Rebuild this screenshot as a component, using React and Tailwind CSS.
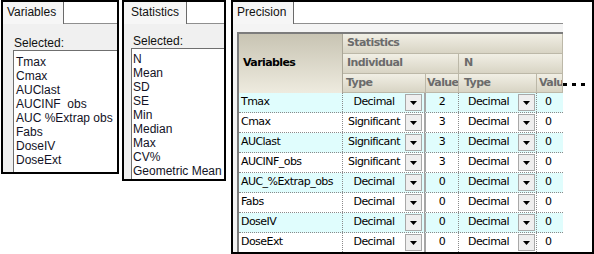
import React from "react";

const sans = { fontFamily: '"Liberation Sans", Arial, sans-serif' };
const tahoma = { fontFamily: '"DejaVu Sans", Verdana, sans-serif' };

const variables = ["Tmax", "Cmax", "AUClast", "AUCINF  obs", "AUC %Extrap obs", "Fabs", "DoseIV", "DoseExt"];
const stats = ["N", "Mean", "SD", "SE", "Min", "Median", "Max", "CV%", "Geometric Mean"];

const rows = [
  { name: "Tmax", type: "Decimal", value: "2" },
  { name: "Cmax", type: "Significant", value: "3" },
  { name: "AUClast", type: "Significant", value: "3" },
  { name: "AUCINF_obs", type: "Significant", value: "3" },
  { name: "AUC_%Extrap_obs", type: "Decimal", value: "0" },
  { name: "Fabs", type: "Decimal", value: "0" },
  { name: "DoseIV", type: "Decimal", value: "0" },
  { name: "DoseExt", type: "Decimal", value: "0" },
];

const Tab = ({ label, width, pad }) => (
  <div className="flex h-[22px] shrink-0">
    <div
      className={`${width} ${pad} h-full bg-[#f6f6f6] border-r border-[#6a6a6a] text-[12px] leading-[20px] text-[#111]`}
      style={sans}
    >
      {label}
    </div>
    <div className="flex-1 border-b border-[#8f8f8f] bg-white" />
  </div>
);

const DropButton = () => (
  <div className="w-[17px] h-[17px] shrink-0 border border-[#a8a8a8] bg-[#efefef] flex items-center justify-center">
    <svg width="7" height="4" viewBox="0 0 7 4">
      <polygon points="0,0 7,0 3.5,4" fill="#000" />
    </svg>
  </div>
);

const HeadCell = ({ className, children }) => (
  <div
    className={`${className} bg-linear-to-b from-[#f1efe5] to-[#d8d4c4] border-b border-r border-[#bcb8a8] flex items-center text-[11px] font-bold text-[#6b6b6b] tracking-[-0.6px] overflow-hidden whitespace-nowrap`}
  >
    {children}
  </div>
);

const ListPanel = ({ width, height, tab, tabWidth, tabPad, labelPad, labelTop, boxMargin, items, itemPad, listTop }) => (
  <div className={`${width} ${height} border-2 border-black bg-[#f0f0f0] flex flex-col overflow-hidden shrink-0`}>
    <Tab label={tab} width={tabWidth} pad={tabPad} />
    <div className={`${labelPad} ${labelTop} text-[12px] leading-[13px] text-[#111]`} style={sans}>
      Selected:
    </div>
    <div className={`${boxMargin} flex-1 bg-white border-l border-t border-[#6f6f6f] ${itemPad} ${listTop}`}>
      {items.map((item) => (
        <div key={item} className="text-[12px] leading-[14px] text-[#121225] whitespace-pre" style={sans}>
          {item}
        </div>
      ))}
    </div>
  </div>
);

const Precision = () => (
  <div className="w-[363px] h-[254px] border-2 border-black bg-white shrink-0 ml-[5px] relative">
    <div className="w-[330px] h-full flex flex-col overflow-hidden bg-[#f4f4f4]">
      <Tab label="Precision" width="w-[61px]" pad="pl-[4px]" />
      <div className="pl-[4px] pt-[8px]" style={tahoma}>
        <div className="border-l-2 border-t-2 border-[#7c7c7c] w-[326px]">
          {/* header */}
          <div className="flex h-[59px]">
            <div className="w-[104px] h-full bg-linear-to-b from-[#c8c4b3] to-[#eeebdf] border-r border-[#aaa697] flex items-center pl-[4px] text-[11px] font-bold text-black tracking-[-0.6px]">
              Variables
            </div>
            <div className="w-[220px] flex flex-col">
              <HeadCell className="h-[20px] w-full pl-[4px]">Statistics</HeadCell>
              <div className="flex h-[20px]">
                <HeadCell className="w-[116px] h-full pl-[4px]">Individual</HeadCell>
                <HeadCell className="w-[104px] h-full pl-[5px]">N</HeadCell>
              </div>
              <div className="flex h-[19px]">
                <HeadCell className="w-[83px] h-full pl-[3px]">Type</HeadCell>
                <HeadCell className="w-[33px] h-full pl-[1px]">Value</HeadCell>
                <HeadCell className="w-[78px] h-full pl-[5px]">Type</HeadCell>
                <HeadCell className="w-[26px] h-full pl-[2px]">Valu</HeadCell>
              </div>
            </div>
          </div>
          {/* rows */}
          {rows.map((row, i) => (
            <div
              key={row.name}
              className={`flex h-[20px] border-b border-dotted border-[#8a8a8a] text-[11px] text-black tracking-[-0.55px] ${
                i % 2 === 0 ? "bg-[#e0fdfd]" : "bg-white"
              }`}
            >
              <div className="w-[104px] border-r border-dotted border-[#8a8a8a] pl-[2px] flex items-center whitespace-nowrap">
                {row.name}
              </div>
              <div className="w-[83px] border-r-2 border-[#a6a6a6] flex items-center pr-[2px]">
                <div className="flex-1 text-center">{row.type}</div>
                <DropButton />
              </div>
              <div className="w-[33px] border-r border-dotted border-[#8a8a8a] flex items-center justify-center">
                {row.value}
              </div>
              <div className="w-[78px] border-r border-dotted border-[#8a8a8a] flex items-center pr-[1px]">
                <div className="flex-1 text-center">Decimal</div>
                <DropButton />
              </div>
              <div className="w-[26px] flex items-center pl-[8px]">0</div>
            </div>
          ))}
        </div>
      </div>
    </div>
    <div className="absolute left-[330px] top-[81px] flex gap-[5px]">
      <div className="w-[4px] h-[3px] bg-black" />
      <div className="w-[4px] h-[3px] bg-black" />
      <div className="w-[4px] h-[3px] bg-black" />
    </div>
  </div>
);

export default function App() {
  return (
    <div className="w-[594px] h-[254px] bg-white flex items-start pl-[1px] overflow-hidden">
      <ListPanel
        width="w-[118px]"
        height="h-[174px]"
        tab="Variables"
        tabWidth="w-[61px]"
        tabPad="pl-[4px]"
        labelPad="pl-[11px]"
        labelTop="pt-[13px]"
        boxMargin="ml-[10px]"
        items={variables}
        itemPad="pl-[2px]"
        listTop="pt-[4px]"
      />
      <div className="ml-[3px]">
        <ListPanel
          width="w-[104px]"
          height="h-[181px]"
          tab="Statistics"
          tabWidth="w-[63px]"
          tabPad="pl-[7px]"
          labelPad="pl-[9px]"
          labelTop="pt-[11px]"
          boxMargin="ml-[7px]"
          items={stats}
          itemPad="pl-[1px]"
          listTop="pt-[3px]"
        />
      </div>
      <Precision />
    </div>
  );
}
